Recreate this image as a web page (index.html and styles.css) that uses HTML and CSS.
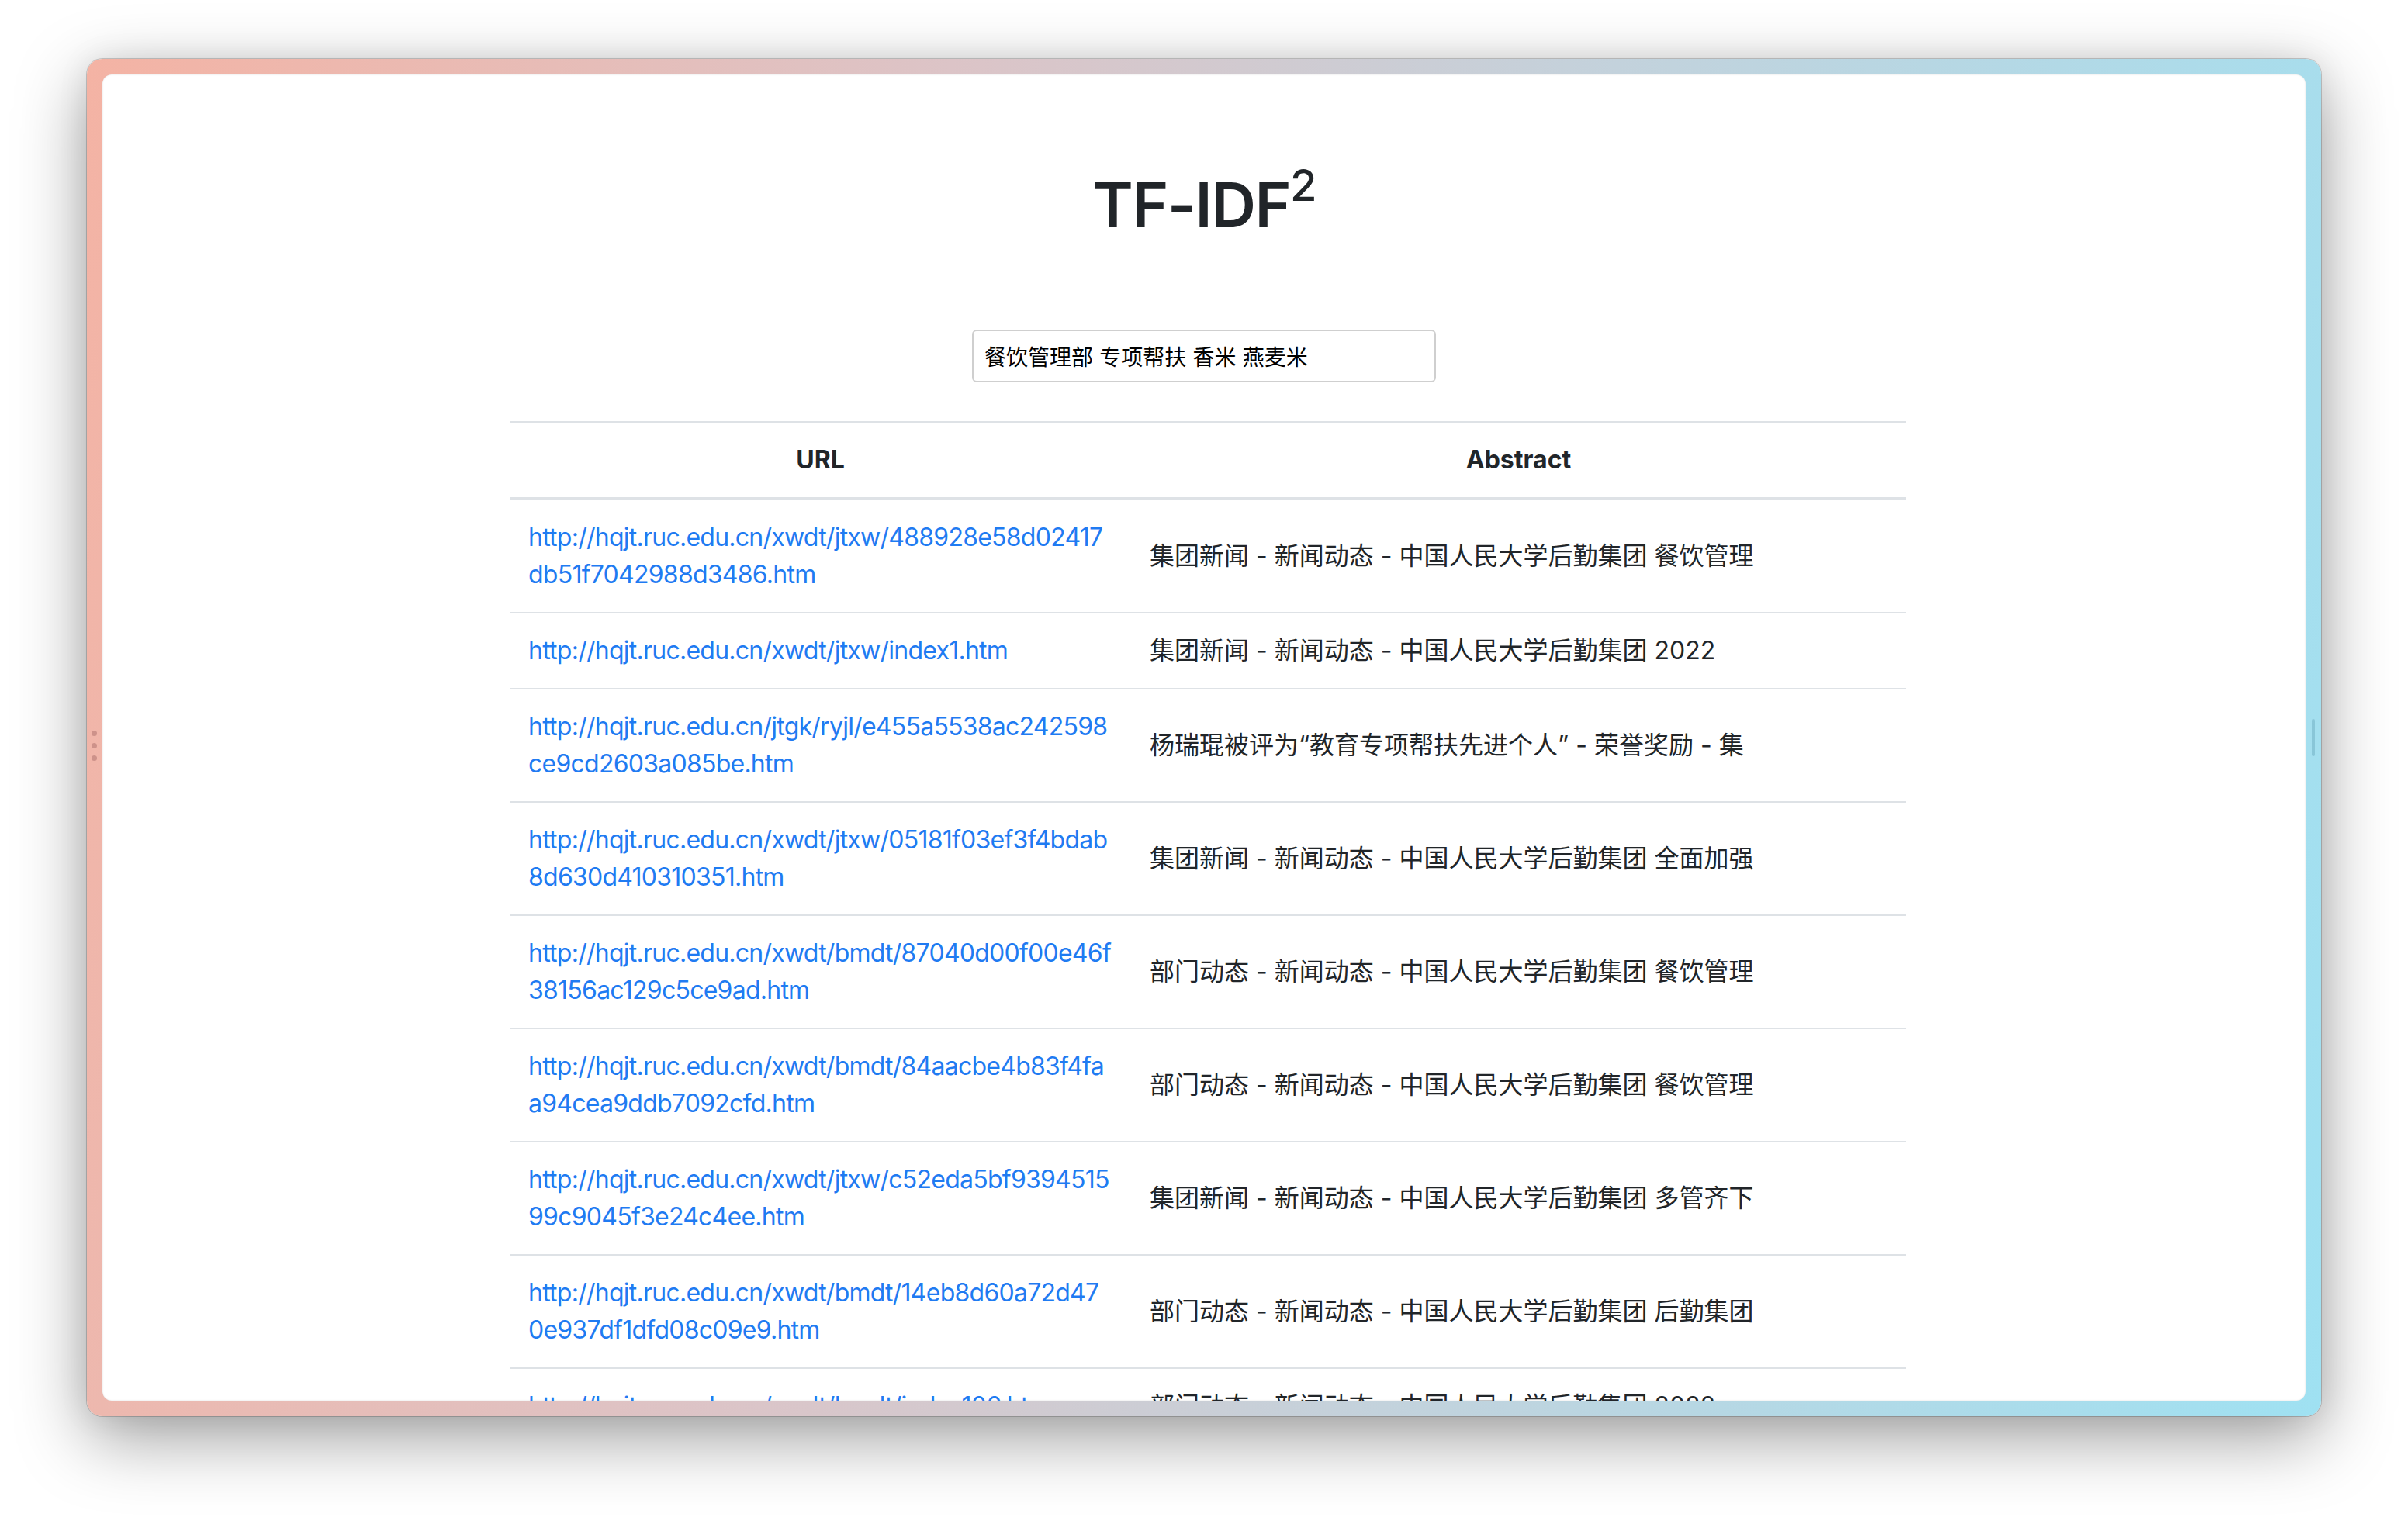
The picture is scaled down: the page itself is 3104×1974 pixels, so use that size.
FILE: index.html
```html
<!DOCTYPE html>
<html lang="zh-CN">
<head>
<meta charset="utf-8">
<title>TF-IDF²</title>
<link rel="stylesheet" href="styles.css">
</head>
<body>
<div class="desk">
  <div class="window">
    <span class="grip-left"><i></i><i></i><i></i></span>
    <span class="grip-right"></span>
    <div class="viewport">
      <main class="container">
        <h1 class="title">TF-IDF<sup>2</sup></h1>
        <input class="search" type="text" value="餐饮管理部 专项帮扶 香米 燕麦米">
        <table class="results">
          <colgroup><col class="col-url"><col class="col-abs"></colgroup>
          <thead>
            <tr><th>URL</th><th>Abstract</th></tr>
          </thead>
          <tbody>
            <tr><td><a href="#">http://hqjt.ruc.edu.cn/xwdt/jtxw/488928e58d02417<br>db51f7042988d3486.htm</a></td><td>集团新闻 - 新闻动态 - 中国人民大学后勤集团 餐饮管理</td></tr>
            <tr><td><a href="#">http://hqjt.ruc.edu.cn/xwdt/jtxw/index1.htm</a></td><td>集团新闻 - 新闻动态 - 中国人民大学后勤集团 2022</td></tr>
            <tr><td><a href="#">http://hqjt.ruc.edu.cn/jtgk/ryjl/e455a5538ac242598<br>ce9cd2603a085be.htm</a></td><td>杨瑞琨被评为“教育专项帮扶先进个人” - 荣誉奖励 - 集</td></tr>
            <tr><td><a href="#">http://hqjt.ruc.edu.cn/xwdt/jtxw/05181f03ef3f4bdab<br>8d630d410310351.htm</a></td><td>集团新闻 - 新闻动态 - 中国人民大学后勤集团 全面加强</td></tr>
            <tr><td><a href="#">http://hqjt.ruc.edu.cn/xwdt/bmdt/87040d00f00e46f<br>38156ac129c5ce9ad.htm</a></td><td>部门动态 - 新闻动态 - 中国人民大学后勤集团 餐饮管理</td></tr>
            <tr><td><a href="#">http://hqjt.ruc.edu.cn/xwdt/bmdt/84aacbe4b83f4fa<br>a94cea9ddb7092cfd.htm</a></td><td>部门动态 - 新闻动态 - 中国人民大学后勤集团 餐饮管理</td></tr>
            <tr><td><a href="#">http://hqjt.ruc.edu.cn/xwdt/jtxw/c52eda5bf9394515<br>99c9045f3e24c4ee.htm</a></td><td>集团新闻 - 新闻动态 - 中国人民大学后勤集团 多管齐下</td></tr>
            <tr><td><a href="#">http://hqjt.ruc.edu.cn/xwdt/bmdt/14eb8d60a72d47<br>0e937df1dfd08c09e9.htm</a></td><td>部门动态 - 新闻动态 - 中国人民大学后勤集团 后勤集团</td></tr>
            <tr><td><a href="#">http://hqjt.ruc.edu.cn/xwdt/bmdt/index106.htm</a></td><td>部门动态 - 新闻动态 - 中国人民大学后勤集团 2022</td></tr>
          </tbody>
        </table>
      </main>
    </div>
  </div>
</div>
</body>
</html>
```
FILE: styles.css
```css
html, body {
  margin: 0;
  background: #ffffff;
}

body {
  font-family: Inter, "Noto Sans CJK SC", sans-serif;
  color: #212529;
}

.desk {
  height: 1974px;
  box-sizing: border-box;
  padding: 76px 0 0 112px;
  overflow: hidden;
}

.window {
  position: relative;
  width: 2880px;
  height: 1750px;
  box-sizing: border-box;
  padding: 20px;
  border-radius: 20px;
  background: linear-gradient(100deg, #f4b3a4 0%, #dcc4c7 35%, #c3d2dc 62%, #9fe1f2 100%);
  box-shadow: 0 0 0 1px rgba(0, 0, 0, 0.18), 0 28px 90px rgba(0, 0, 0, 0.38), 0 0 40px rgba(0, 0, 0, 0.08);
}

.grip-left {
  position: absolute;
  left: 6px;
  top: 866px;
  display: flex;
  flex-direction: column;
  gap: 9px;
}

.grip-left i {
  width: 7px;
  height: 7px;
  border-radius: 50%;
  background: rgba(140, 80, 80, 0.35);
}

.grip-right {
  position: absolute;
  right: 8px;
  top: 851px;
  width: 4px;
  height: 48px;
  border-radius: 2px;
  background: rgba(0, 70, 100, 0.16);
}

.viewport {
  height: 100%;
  background: #ffffff;
  border-radius: 12px;
  overflow: hidden;
  box-shadow: inset 0 0 2px rgba(0, 0, 0, 0.15);
}

.container {
  width: 1800px;
  margin: 0 auto;
  padding-top: 120px;
}

.title {
  margin: 0;
  font-size: 80px;
  font-weight: 600;
  line-height: 96px;
  text-align: center;
  letter-spacing: -1.5px;
}

.title sup {
  font-size: 56px;
  font-weight: 500;
  line-height: 0;
  position: relative;
  vertical-align: baseline;
  top: -34px;
}

.search {
  display: block;
  width: 598px;
  height: 68px;
  box-sizing: border-box;
  margin: 113px auto 0;
  padding: 0 14px;
  border: 2px solid #cfcfcf;
  border-radius: 6px;
  font-family: "Noto Sans CJK SC", sans-serif;
  font-size: 28px;
  word-spacing: 2px;
  color: #000;
  background: #fff;
  outline: none;
}

.results {
  width: 1800px;
  margin: 50px 0 0 5px;
  border-collapse: collapse;
  table-layout: fixed;
  font-size: 32px;
  line-height: 48px;
}

.col-url {
  width: 801px;
}

.results th {
  padding: 24px;
  font-weight: 700;
  text-align: center;
  border-top: 2px solid #dee2e6;
  border-bottom: 4px solid #dee2e6;
}

.results td {
  padding: 24px;
  vertical-align: middle;
  border-top: 2px solid #dee2e6;
  white-space: nowrap;
}

.results a {
  color: #1f7bf2;
  text-decoration: none;
  letter-spacing: -0.75px;
}
```
